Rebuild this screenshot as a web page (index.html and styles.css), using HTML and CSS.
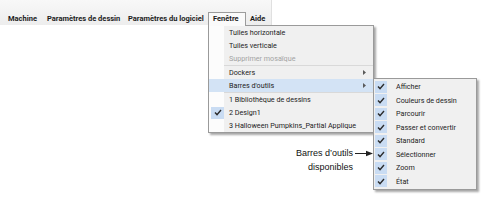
FILE: index.html
```html
<!DOCTYPE html>
<html lang="fr">
<head>
<meta charset="utf-8">
<link rel="stylesheet" href="styles.css">
</head>
<body>
<div class="menubar">
  <span class="mi first">Machine</span>
  <span class="mi w2">Paramètres de dessin</span>
  <span class="mi w3">Paramètres du logiciel</span>
  <span class="mi tab">Fenêtre</span>
  <span class="mi aide">Aide</span>
</div>

<div class="dropdown">
  <div class="row"><span class="ck"></span><span class="lbl">Tuiles horizontale</span></div>
  <div class="row"><span class="ck"></span><span class="lbl">Tuiles verticale</span></div>
  <div class="row disabled"><span class="ck"></span><span class="lbl">Supprimer mosaïque</span></div>
  <div class="sep"></div>
  <div class="row"><span class="ck"></span><span class="lbl">Dockers</span>
    <svg class="arr" width="3" height="5" viewBox="0 0 3 5"><polygon points="0,0 3,2.5 0,5" fill="#5a5a5a"/></svg></div>
  <div class="row hl"><span class="ck"></span><span class="lbl">Barres d'outils</span>
    <svg class="arr" width="3" height="5" viewBox="0 0 3 5"><polygon points="0,0 3,2.5 0,5" fill="#5a5a5a"/></svg></div>
  <div class="sep"></div>
  <div class="row"><span class="ck"></span><span class="lbl">1 Bibliothèque de dessins</span></div>
  <div class="row"><span class="ck on"><svg width="8" height="7" viewBox="0 0 8 7"><path d="M1 3.6 L3 5.6 L7 1" fill="none" stroke="#2b2b2b" stroke-width="1.4"/></svg></span><span class="lbl">2 Design1</span></div>
  <div class="row"><span class="ck"></span><span class="lbl">3 Halloween Pumpkins_Partial Applique</span></div>
</div>

<div class="submenu">
  <div class="srow"><span class="sq"><svg width="8" height="7" viewBox="0 0 8 7"><path d="M1 3.6 L3 5.6 L7 1" fill="none" stroke="#2b2b2b" stroke-width="1.4"/></svg></span><span class="lbl">Afficher</span></div>
  <div class="srow"><span class="sq"><svg width="8" height="7" viewBox="0 0 8 7"><path d="M1 3.6 L3 5.6 L7 1" fill="none" stroke="#2b2b2b" stroke-width="1.4"/></svg></span><span class="lbl">Couleurs de dessin</span></div>
  <div class="srow"><span class="sq"><svg width="8" height="7" viewBox="0 0 8 7"><path d="M1 3.6 L3 5.6 L7 1" fill="none" stroke="#2b2b2b" stroke-width="1.4"/></svg></span><span class="lbl">Parcourir</span></div>
  <div class="srow"><span class="sq"><svg width="8" height="7" viewBox="0 0 8 7"><path d="M1 3.6 L3 5.6 L7 1" fill="none" stroke="#2b2b2b" stroke-width="1.4"/></svg></span><span class="lbl">Passer et convertir</span></div>
  <div class="srow"><span class="sq"><svg width="8" height="7" viewBox="0 0 8 7"><path d="M1 3.6 L3 5.6 L7 1" fill="none" stroke="#2b2b2b" stroke-width="1.4"/></svg></span><span class="lbl">Standard</span></div>
  <div class="srow"><span class="sq"><svg width="8" height="7" viewBox="0 0 8 7"><path d="M1 3.6 L3 5.6 L7 1" fill="none" stroke="#2b2b2b" stroke-width="1.4"/></svg></span><span class="lbl">Sélectionner</span></div>
  <div class="srow"><span class="sq"><svg width="8" height="7" viewBox="0 0 8 7"><path d="M1 3.6 L3 5.6 L7 1" fill="none" stroke="#2b2b2b" stroke-width="1.4"/></svg></span><span class="lbl">Zoom</span></div>
  <div class="srow"><span class="sq"><svg width="8" height="7" viewBox="0 0 8 7"><path d="M1 3.6 L3 5.6 L7 1" fill="none" stroke="#2b2b2b" stroke-width="1.4"/></svg></span><span class="lbl">État</span></div>
</div>

<div class="callout">
  <div class="ctext">Barres d’outils<br>disponibles</div>
  <svg class="carrow" width="18" height="7" viewBox="0 0 18 7"><line x1="0" y1="3.5" x2="13" y2="3.5" stroke="#222" stroke-width="1"/><polygon points="11,0.8 18,3.5 11,6.2" fill="#222"/></svg>
</div>
</body>
</html>
```

FILE: styles.css
```css
body {
  margin: 0;
  width: 491px;
  height: 203px;
  background: #ffffff;
  font-family: Roboto, "Open Sans", sans-serif;
  color: #1c1c1c;
  position: relative;
  overflow: hidden;
}

.menubar {
  display: flex;
  width: 272px;
  height: 25px;
  box-sizing: border-box;
  padding-top: 12px;
  background: linear-gradient(#f8f8f8, #ededed);
  border-right: 1px solid #e0e0e0;
}

.mi {
  flex: none;
  font-weight: bold;
  font-size: 7.5px;
  height: 13px;
  line-height: 13px;
  box-sizing: border-box;
  white-space: nowrap;
}

.first { padding-left: 8px; width: 47px; }
.w2 { width: 81px; }
.w3 { width: 80px; }

.tab {
  width: 38px;
  height: 14px;
  border: 1px solid #9c9c9c;
  border-bottom: none;
  background: #fafafa;
  padding-left: 4px;
  line-height: 12px;
  position: relative;
  z-index: 3;
}

.aide { padding-left: 4px; }

.dropdown {
  position: absolute;
  left: 208px;
  top: 25px;
  width: 166px;
  box-sizing: border-box;
  border: 1px solid #9a9a9a;
  background: linear-gradient(to right, #fcfcfc 15px, #f0f0f0 15px);
  box-shadow: 2px 2px 2px rgba(0, 0, 0, 0.35);
  z-index: 2;
}

.row {
  display: flex;
  align-items: center;
  height: 13px;
  font-size: 7.2px;
  white-space: nowrap;
}

.row.hl { background: #d3e3f5; }
.row.disabled { color: #a3a3a3; }

.ck {
  flex: none;
  width: 20px;
  height: 13px;
  display: flex;
  align-items: center;
  justify-content: center;
  box-sizing: border-box;
}

.ck.on {
  width: 13px;
  height: 12px;
  margin: 0 5px 0 2px;
  background: #c9dcf3;
}

.arr { margin-left: auto; margin-right: 7px; }

.sep {
  height: 1px;
  margin-left: 15px;
  background: #d9d9d9;
}

.submenu {
  position: absolute;
  left: 373px;
  top: 78px;
  width: 104px;
  box-sizing: border-box;
  border: 1px solid #9a9a9a;
  background: #f0f0f0;
  box-shadow: 2px 2px 2px rgba(0, 0, 0, 0.35);
  padding: 1px 0;
  z-index: 2;
}

.srow {
  display: flex;
  align-items: center;
  height: 13.5px;
  font-size: 7.2px;
  white-space: nowrap;
}

.sq {
  flex: none;
  width: 12px;
  height: 12px;
  margin: 0 9px 0 1px;
  background: #c9dcf3;
  display: flex;
  align-items: center;
  justify-content: center;
}

.callout {
  position: absolute;
  left: 280px;
  top: 146px;
  display: flex;
  align-items: flex-start;
}

.ctext {
  width: 73px;
  text-align: right;
  font-family: "Liberation Sans", Arial, sans-serif;
  font-size: 9px;
  line-height: 14px;
  color: #111;
}

.carrow {
  margin-left: 2px;
  margin-top: 4px;
  position: relative;
  z-index: 4;
}
```
